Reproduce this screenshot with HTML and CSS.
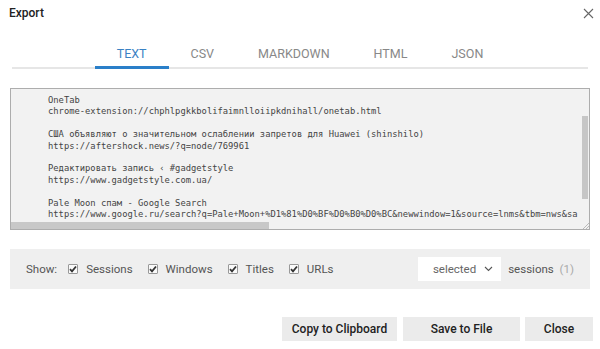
FILE: index.html
```html
<!DOCTYPE html>
<html lang="en">
<head>
  <meta charset="UTF-8" />
  <title>Export</title>
  <link rel="stylesheet" href="styles.css">
</head>
<body>

<div class="header">
  <h1>Export</h1>
  <span class="close-x">
    <svg width="11" height="11" viewBox="0 0 11 11"><path d="M1 1L10 10M10 1L1 10" stroke="#666" stroke-width="1.1" fill="none"/></svg>
  </span>
</div>

<div class="tabs">
  <span class="tab active">TEXT</span>
  <span class="tab">CSV</span>
  <span class="tab">MARKDOWN</span>
  <span class="tab">HTML</span>
  <span class="tab">JSON</span>
</div>

<div class="output">
<pre>OneTab
chrome-extension://chphlpgkkbolifaimnlloiipkdnihall/onetab.html

США объявляют о значительном ослаблении запретов для Huawei (shinshilo)
https://aftershock.news/?q=node/769961

Редактировать запись ‹ #gadgetstyle
https://www.gadgetstyle.com.ua/

Pale Moon спам - Google Search
https://www.google.ru/search?q=Pale+Moon+%D1%81%D0%BF%D0%B0%D0%BC&amp;newwindow=1&amp;source=lnms&amp;tbm=nws&amp;sa</pre>
  <div class="vscroll"><div class="vthumb"></div></div>
  <div class="hthumb"></div>
  <div class="grip"></div>
</div>

<div class="options">
  <span class="show">Show:</span>
  <label class="check"><span class="box"><svg width="8" height="8" viewBox="0 0 8 8"><path d="M1 4.2L3 6.3L7 1.5" stroke="#333" stroke-width="1.8" fill="none"/></svg></span>Sessions</label>
  <label class="check"><span class="box"><svg width="8" height="8" viewBox="0 0 8 8"><path d="M1 4.2L3 6.3L7 1.5" stroke="#333" stroke-width="1.8" fill="none"/></svg></span>Windows</label>
  <label class="check"><span class="box"><svg width="8" height="8" viewBox="0 0 8 8"><path d="M1 4.2L3 6.3L7 1.5" stroke="#333" stroke-width="1.8" fill="none"/></svg></span>Titles</label>
  <label class="check"><span class="box"><svg width="8" height="8" viewBox="0 0 8 8"><path d="M1 4.2L3 6.3L7 1.5" stroke="#333" stroke-width="1.8" fill="none"/></svg></span>URLs</label>
  <div class="select">
    <span>selected</span>
    <svg width="9" height="6" viewBox="0 0 9 6"><path d="M1 1L4.5 4.5L8 1" stroke="#555" stroke-width="1.1" fill="none"/></svg>
  </div>
  <span class="sessions">sessions <span class="count">(1)</span></span>
</div>

<div class="actions">
  <button class="btn btn-copy">Copy to Clipboard</button>
  <button class="btn btn-save">Save to File</button>
  <button class="btn btn-close">Close</button>
</div>

</body>
</html>
```

FILE: styles.css
```css
body {
  font-family: Roboto, "Liberation Sans", Arial, sans-serif;
  background: #fff;
  margin: 0;
  padding: 0;
  color: #555;
}
.header {
  display: flex;
  justify-content: space-between;
  align-items: flex-start;
  height: 35px;
  padding: 0 6px 0 9px;
}
.header h1 {
  margin: 6px 0 0;
  font-size: 12px;
  font-weight: 500;
  line-height: 14px;
  color: #222;
}
.close-x {
  margin-top: 8px;
  line-height: 0;
}
.tabs {
  display: flex;
  justify-content: center;
  margin: 0 12px;
  border-bottom: 2px solid #e6e6e6;
}
.tab {
  padding: 11px 22px 4px;
  margin-bottom: -2px;
  border-bottom: 3px solid transparent;
  font-size: 12.5px;
  line-height: 16px;
  color: #888;
}
.tab.active {
  color: #3a82c4;
  border-bottom-color: #2a7fc9;
}
.output {
  position: relative;
  margin: 19px 10px 0;
  height: 142px;
  box-sizing: border-box;
  border: 1px solid #adadad;
  background: #f2f2f2;
  overflow: hidden;
}
.output pre {
  margin: 0;
  padding: 6px 0 0 37px;
  font-family: "DejaVu Sans Mono", "Liberation Mono", monospace;
  font-size: 8.8px;
  line-height: 11.4px;
  color: #444;
}
.vscroll {
  position: absolute;
  top: 0;
  right: 1px;
  width: 6px;
  height: 133px;
}
.vthumb {
  margin-top: 27px;
  height: 83px;
  background: #c6c6c6;
}
.hthumb {
  position: absolute;
  left: 0;
  bottom: 0;
  width: 258px;
  height: 7px;
  background: #c8c8c8;
}
.grip {
  position: absolute;
  right: 0;
  bottom: 0;
  width: 7px;
  height: 7px;
  background: linear-gradient(135deg, transparent 55%, #bbb 55%, #bbb 62%, transparent 62%, transparent 75%, #bbb 75%, #bbb 82%, transparent 82%);
}
.options {
  display: flex;
  align-items: center;
  height: 40px;
  margin: 19px 10px 0;
  padding: 0 16px;
  background: #efefef;
  font-size: 11.5px;
}
.show {
  margin-right: 11px;
}
.check {
  display: flex;
  align-items: center;
  margin-right: 15px;
}
.box {
  display: flex;
  align-items: center;
  justify-content: center;
  width: 8px;
  height: 8px;
  margin-right: 8px;
  border: 1px solid #999;
  border-radius: 1px;
  background: #fafafa;
}
.select {
  display: flex;
  align-items: center;
  justify-content: flex-end;
  gap: 8px;
  width: 83px;
  height: 24px;
  box-sizing: border-box;
  padding-right: 8px;
  margin-left: auto;
  background: #fff;
  color: #666;
}
.sessions {
  margin-left: 7px;
}
.count {
  color: #aaa;
  margin-left: 3px;
}
.actions {
  display: flex;
  justify-content: flex-end;
  gap: 5px;
  margin-top: 28px;
  padding-right: 7px;
}
.btn {
  height: 24px;
  border: none;
  background: #ebebeb;
  font-family: Roboto, "Liberation Sans", Arial, sans-serif;
  font-size: 12px;
  font-weight: 500;
  color: #222;
  cursor: pointer;
}
.btn-copy {
  width: 115px;
}
.btn-save {
  width: 117px;
  margin-left: 1px;
}
.btn-close {
  width: 68px;
}
```
